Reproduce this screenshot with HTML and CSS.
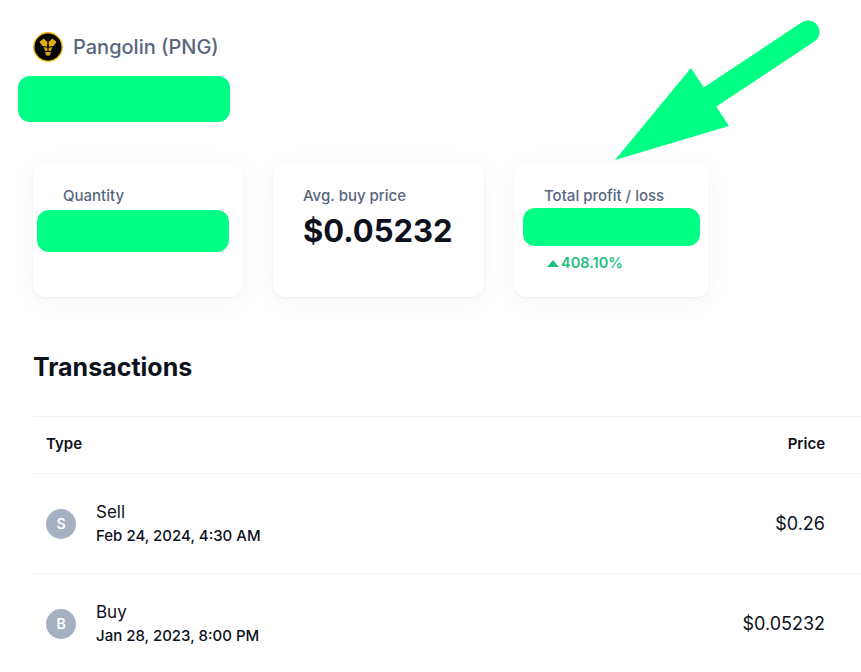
FILE: index.html
```html
<!DOCTYPE html>
<html lang="en">
<head>
    <meta charset="UTF-8">
    <meta name="viewport" content="width=device-width, initial-scale=1.0">
    <title>Pangolin (PNG) | Portfolio</title>
    <link rel="stylesheet" href="styles.css">
</head>
<body>
    <header class="coin-header">
        <svg class="coin-logo" viewBox="0 0 30 30" aria-hidden="true">
            <circle cx="15" cy="15" r="14.2" fill="#000" stroke="#f0b90b" stroke-width="1.4"/>
            <path d="M6.5 10 L10.5 6.5 L14.5 10 L14 14.5 L9.5 14 Z" fill="#e3ae10"/>
            <path d="M23.5 10 L19.5 6.5 L15.5 10 L16 14.5 L20.5 14 Z" fill="#e3ae10"/>
            <path d="M10.5 15.2 L14.4 15.6 L14.6 19 L12 19 Z" fill="#c9960c"/>
            <path d="M19.5 15.2 L15.6 15.6 L15.4 19 L18 19 Z" fill="#c9960c"/>
            <path d="M12 20 L18 20 L17 23 L15 24 L13 23 Z" fill="#d9a50e"/>
        </svg>
        <span class="coin-name">Pangolin (PNG)</span>
    </header>
    <div class="redact redact-balance"></div>

    <section class="stats">
        <div class="stat-card stat-quantity">
            <div class="stat-label">Quantity</div>
            <div class="redact redact-quantity"></div>
        </div>
        <div class="stat-card stat-price">
            <div class="stat-label">Avg. buy price</div>
            <div class="stat-value">$0.05232</div>
        </div>
        <div class="stat-card stat-profit">
            <div class="stat-label">Total profit / loss</div>
            <div class="redact redact-profit"></div>
            <div class="stat-change"><span class="caret-up"></span>408.10%</div>
        </div>
    </section>

    <h2 class="section-title">Transactions</h2>

    <table class="tx-table">
        <thead>
            <tr>
                <th class="col-type">Type</th>
                <th class="col-price">Price</th>
            </tr>
        </thead>
        <tbody>
            <tr>
                <td>
                    <div class="tx-type">
                        <span class="tx-badge">S</span>
                        <div>
                            <div class="tx-name">Sell</div>
                            <div class="tx-date">Feb 24, 2024, 4:30 AM</div>
                        </div>
                    </div>
                </td>
                <td class="col-price">$0.26</td>
            </tr>
            <tr>
                <td>
                    <div class="tx-type">
                        <span class="tx-badge">B</span>
                        <div>
                            <div class="tx-name">Buy</div>
                            <div class="tx-date">Jan 28, 2023, 8:00 PM</div>
                        </div>
                    </div>
                </td>
                <td class="col-price">$0.05232</td>
            </tr>
        </tbody>
    </table>

    <svg class="arrow" viewBox="0 0 861 200" aria-hidden="true">
        <path d="M710 97 L808 32" fill="none" stroke="#00ff85" stroke-width="23" stroke-linecap="round"/>
        <path d="M615 160 L691 68 L729 126 Z" fill="#00ff85"/>
    </svg>
</body>
</html>
```

FILE: styles.css
```css
:root {
    --text: #0d111c;
    --text-secondary: #58667e;
    --border: #eff2f5;
    --redact: #00ff85;
    --success: #1fbf80;
    --badge: #a6b0c3;
}

* {
    margin: 0;
    padding: 0;
    box-sizing: border-box;
}

html {
    overflow: hidden;
}

body {
    background: #ffffff;
    color: var(--text);
    font-family: Inter, "Liberation Sans", sans-serif;
    padding: 32px 0 0 33px;
    position: relative;
}

.coin-header {
    display: flex;
    align-items: center;
    gap: 10px;
    height: 30px;
}

.coin-logo {
    width: 30px;
    height: 30px;
    flex-shrink: 0;
}

.coin-name {
    font-size: 20px;
    line-height: 30px;
    font-weight: 500;
    color: var(--text-secondary);
}

/* Green blocks painted over the hidden amounts */
.redact {
    background: var(--redact);
    border-radius: 12px;
}

.redact-balance {
    width: 212px;
    height: 46px;
    margin: 14px 0 0 -15px;
}

.redact-quantity {
    width: 192px;
    height: 42px;
    margin: 5px 0 0 -26px;
}

.redact-profit {
    width: 177px;
    height: 38px;
    margin: 3px 0 0 -21px;
}

.stats {
    display: flex;
    gap: 30px;
    margin-top: 40px;
}

.stat-card {
    height: 135px;
    padding: 25px 30px 0;
    background: #ffffff;
    border-radius: 12px;
    box-shadow: 0 1px 2px rgba(88, 102, 126, 0.08), 0 4px 24px rgba(88, 102, 126, 0.06);
}

.stat-quantity {
    width: 210px;
}

.stat-price {
    width: 211px;
}

.stat-profit {
    width: 195px;
}

.stat-label {
    font-size: 15px;
    line-height: 18px;
    font-weight: 500;
    color: var(--text-secondary);
}

.stat-value {
    font-size: 31px;
    line-height: 40px;
    font-weight: 700;
    margin-top: 6px;
}

.stat-change {
    display: flex;
    align-items: center;
    gap: 2px;
    margin-top: 8px;
    padding-left: 3px;
    font-size: 14.5px;
    line-height: 18px;
    font-weight: 600;
    color: var(--success);
}

.caret-up {
    width: 0;
    height: 0;
    border-left: 6px solid transparent;
    border-right: 6px solid transparent;
    border-bottom: 7px solid var(--success);
}

.section-title {
    font-size: 25px;
    line-height: 32px;
    font-weight: 700;
    margin-top: 54px;
}

.tx-table {
    width: 828px;
    margin-top: 33px;
    border-collapse: collapse;
}

.tx-table th,
.tx-table td {
    border-top: 1px solid var(--border);
    padding: 0 36px 0 13px;
    text-align: left;
}

.tx-table th {
    height: 57px;
    padding-bottom: 3px;
    font-size: 15px;
    font-weight: 600;
}

.tx-table td {
    height: 100px;
    font-size: 18px;
}

.tx-table .col-price {
    text-align: right;
}

.tx-type {
    display: flex;
    align-items: center;
    gap: 20px;
}

.tx-badge {
    width: 30px;
    height: 30px;
    border-radius: 50%;
    background: var(--badge);
    color: #ffffff;
    font-size: 14px;
    font-weight: 600;
    display: flex;
    align-items: center;
    justify-content: center;
}

.tx-name {
    font-size: 17px;
    line-height: 24px;
}

.tx-date {
    font-size: 15px;
    line-height: 24px;
    font-weight: 500;
}

.arrow {
    position: absolute;
    top: 0;
    left: 0;
    width: 861px;
    height: 200px;
    pointer-events: none;
}
```
